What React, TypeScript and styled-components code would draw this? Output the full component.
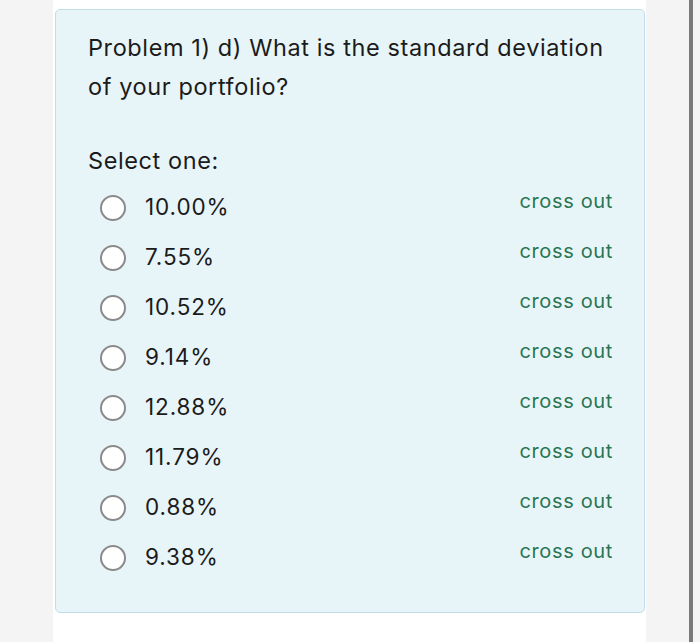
import styled, { createGlobalStyle } from "styled-components";

const GlobalStyle = createGlobalStyle`
  html, body {
    margin: 0;
    padding: 0;
    background: #f4f4f4;
  }
  body {
    font-family: Inter, "Liberation Sans", Arial, sans-serif;
    color: #1b1b1b;
  }
`;

const Page = styled.div`
  display: flex;
  height: 642px;
  background: #f4f4f4;
`;

const Column = styled.main`
  margin-left: 53px;
  width: 593px;
  padding: 9px 1px 0 2px;
  box-sizing: border-box;
  background: #ffffff;
`;

const ScrollTrack = styled.div`
  margin-left: 43px;
  width: 4px;
  background: #7a7a7a;
`;

const Card = styled.section`
  background: #e8f5f8;
  border: 1px solid #bfdfe8;
  border-radius: 5px;
  padding: 18px 32px 29px 32px;
  height: 604px;
  box-sizing: border-box;
`;

const Question = styled.p`
  margin: 0;
  font-size: 23.5px;
  letter-spacing: 0.6px;
  line-height: 39px;
  font-weight: 400;
`;

const Prompt = styled.p`
  margin: 35px 0 3px 0;
  font-size: 23.5px;
  letter-spacing: 0.6px;
  line-height: 39px;
`;

const OptionList = styled.ul`
  list-style: none;
  margin: 0;
  padding: 0;
`;

const OptionRow = styled.li`
  display: flex;
  align-items: center;
  height: 50px;
  padding-left: 12px;
`;

const Radio = styled.span`
  width: 26px;
  height: 26px;
  box-sizing: border-box;
  border: 2.5px solid #8a8a8a;
  border-radius: 50%;
  background: #ffffff;
  flex-shrink: 0;
`;

const OptionLabel = styled.span`
  margin-left: 19px;
  font-size: 22.5px;
  letter-spacing: 0.9px;
  margin-top: -4px;
  flex: 1;
`;

const CrossOut = styled.span`
  color: #2a7654;
  font-size: 20px;
  letter-spacing: 0.65px;
  margin-right: -1px;
  margin-top: -14px;
`;

const options = ["10.00%", "7.55%", "10.52%", "9.14%", "12.88%", "11.79%", "0.88%", "9.38%"];

export default function App() {
  return (
    <>
      <GlobalStyle />
      <Page>
        <Column>
          <Card>
            <Question>
              Problem 1) d) What is the standard deviation
              <br />
              of your portfolio?
            </Question>
            <Prompt>Select one:</Prompt>
            <OptionList>
              {options.map((o) => (
                <OptionRow key={o}>
                  <Radio />
                  <OptionLabel>{o}</OptionLabel>
                  <CrossOut>cross out</CrossOut>
                </OptionRow>
              ))}
            </OptionList>
          </Card>
        </Column>
        <ScrollTrack />
      </Page>
    </>
  );
}
